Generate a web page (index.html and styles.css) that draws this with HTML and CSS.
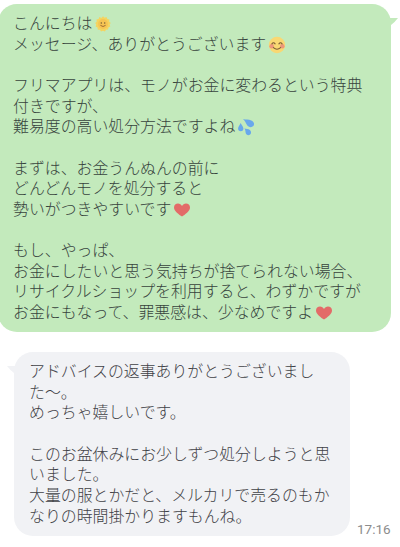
FILE: index.html
```html
<!DOCTYPE html>
<html lang="ja">
<head>
    <meta charset="UTF-8">
    <meta name="viewport" content="width=device-width, initial-scale=1.0">
    <title>トーク</title>
    <link rel="stylesheet" href="styles.css">
</head>
<body>
    <!-- shared emoji shapes -->
    <svg class="defs" width="0" height="0">
        <symbol id="heart" viewBox="0 0 18 18">
            <path fill="#e36b68" d="M9 15.6C6.2 13.6 1 10.4 1 6.5C1 3.9 2.8 2.4 5 2.4c1.8 0 3.2 1 4 2.5c.8-1.5 2.2-2.5 4-2.5c2.2 0 4 1.5 4 4.1C17 10.4 11.8 13.6 9 15.6z"/>
        </symbol>
    </svg>

    <div class="chat">
        <div class="row sent">
            <div class="bubble">
                <p>こんにちは<svg class="emoji" viewBox="0 0 18 18">
                    <path fill="#f5d45f" d="M9 1.3l1.5 1.5 2-.8.8 2 2.1.5-.2 2.1 1.500 1.400-1.100 1.500.7 2-1.900 1-.3 2.100-2.100.1-1.100 1.700L9 15.700l-2 .8-1.100-1.700-2.100-.1-.3-2.100-1.900-1 .7-2-1.100-1.500 1.500-1.400-.2-2.100 2.100-.5.8-2 2 .8z"/>
                    <circle cx="9" cy="9" r="4.900" fill="#f6c453"/>
                    <circle cx="7.300" cy="8" r=".75" fill="#755e35"/>
                    <circle cx="10.700" cy="8" r=".75" fill="#755e35"/>
                    <path d="M6.400 10.300q2.600 2.400 5.200 0" fill="none" stroke="#94642f" stroke-width=".9"/>
                </svg></p>
                <p>メッセージ、ありがとうございます<svg class="emoji" viewBox="0 0 18 18">
                    <circle cx="9" cy="9" r="8.200" fill="#f9d873"/>
                    <circle cx="3.700" cy="10.300" r="2.300" fill="#ed987b"/>
                    <circle cx="14.300" cy="10.300" r="2.300" fill="#ed987b"/>
                    <path d="M3.900 7.900q1.600-2.400 3.200 0M10.900 7.900q1.600-2.400 3.200 0M5.400 11.600q3.600 3.200 7.200 0" fill="none" stroke="#7b5b35" stroke-width="1.100" stroke-linecap="round"/>
                </svg></p>
                <br>
                <p>フリマアプリは、モノがお金に変わるという特典<br>付きですが、</p>
                <p>難易度の高い処分方法ですよね<svg class="emoji" viewBox="0 0 18 18">
                    <path fill="#69a8ec" d="M3.700 4.900C2.700 7.200 1.100 8.600 1.100 10.500a2.600 2.600 0 0 0 5.300 0C6.400 8.500 4.500 7 3.700 4.900z"/>
                    <path fill="#69a8ec" d="M6 1.100c2.600 1 5.700.2 8.300 1.300 3 1.300 3.400 4.200 2 5.700-1.700 1.700-4.800 1.300-6.300-1C8.600 5 8.300 2.900 6 1.100z"/>
                    <path fill="#69a8ec" d="M7.300 10.500c2 .6 4.100.1 5.600 1.500 1.700 1.600 1.400 4-.1 4.800-1.700 1-3.700 0-4.100-1.800-.4-1.700 0-3-1.400-4.500z"/>
                </svg></p>
                <br>
                <p>まずは、お金うんぬんの前に</p>
                <p>どんどんモノを処分すると</p>
                <p>勢いがつきやすいです<svg class="emoji"><use href="#heart"/></svg></p>
                <br>
                <p>もし、やっぱ、</p>
                <p>お金にしたいと思う気持ちが捨てられない場合、</p>
                <p>リサイクルショップを利用すると、わずかですが</p>
                <p>お金にもなって、罪悪感は、少なめですよ<svg class="emoji"><use href="#heart"/></svg></p>
                <svg class="tail" viewBox="0 0 9 9"><path d="M0 1H9Q6 5 2 8L0 9z"/></svg>
            </div>
        </div>

        <div class="row received">
            <div class="bubble">
                <p>アドバイスの返事ありがとうございまし<br>た〜。</p>
                <p>めっちゃ嬉しいです。</p>
                <br>
                <p>このお盆休みにお少しずつ処分しようと思<br>いました。</p>
                <p>大量の服とかだと、メルカリで売るのもか<br>なりの時間掛かりますもんね。</p>
                <svg class="tail" viewBox="0 0 9 9"><path d="M9 1H0Q3 5 7 8L9 9z"/></svg>
            </div>
            <time class="time">17:16</time>
        </div>
    </div>
</body>
</html>
```

FILE: styles.css
```css
* {
    box-sizing: border-box;
}
body {
    margin: 0;
    background: #fff;
    font-family: "Noto Sans CJK JP", sans-serif;
    font-size: 15.88px;
    font-weight: 300;
    line-height: 20.65px;
    color: #37433d;
    overflow: hidden;
}
.defs {
    display: block;
}
.chat {
    display: flex;
    flex-direction: column;
    gap: 20px;
    padding-top: 4px;
}
.row {
    display: flex;
    align-items: flex-end;
}
.bubble {
    position: relative;
    border-radius: 19px;
    white-space: nowrap;
}
.bubble p {
    margin: 0;
    height: 20.65px;
}
.bubble p:has(br) {
    height: 41.3px;
}
.sent .bubble {
    width: 393px;
    height: 328px;
    margin-left: -2px;
    padding: 9px 15px;
    background: #c3eabc;
}
.received {
    color: #3f4146;
}
.received .bubble {
    width: 336px;
    height: 184px;
    margin-left: 14px;
    padding: 9px 15px;
    background: #f1f2f5;
}
.tail {
    position: absolute;
    top: 13px;
    width: 9px;
    height: 9px;
}
.sent .tail {
    right: -7px;
    fill: #c3eabc;
}
.received .tail {
    left: -7px;
    fill: #f1f2f5;
}
.emoji {
    width: 18px;
    height: 18px;
    margin-left: 2px;
    vertical-align: -4px;
}
.time {
    margin: 0 0 0 7px;
    font-family: Roboto, sans-serif;
    font-size: 13.5px;
    font-weight: 400;
    line-height: 14px;
    color: #8c8c8c;
}
```
